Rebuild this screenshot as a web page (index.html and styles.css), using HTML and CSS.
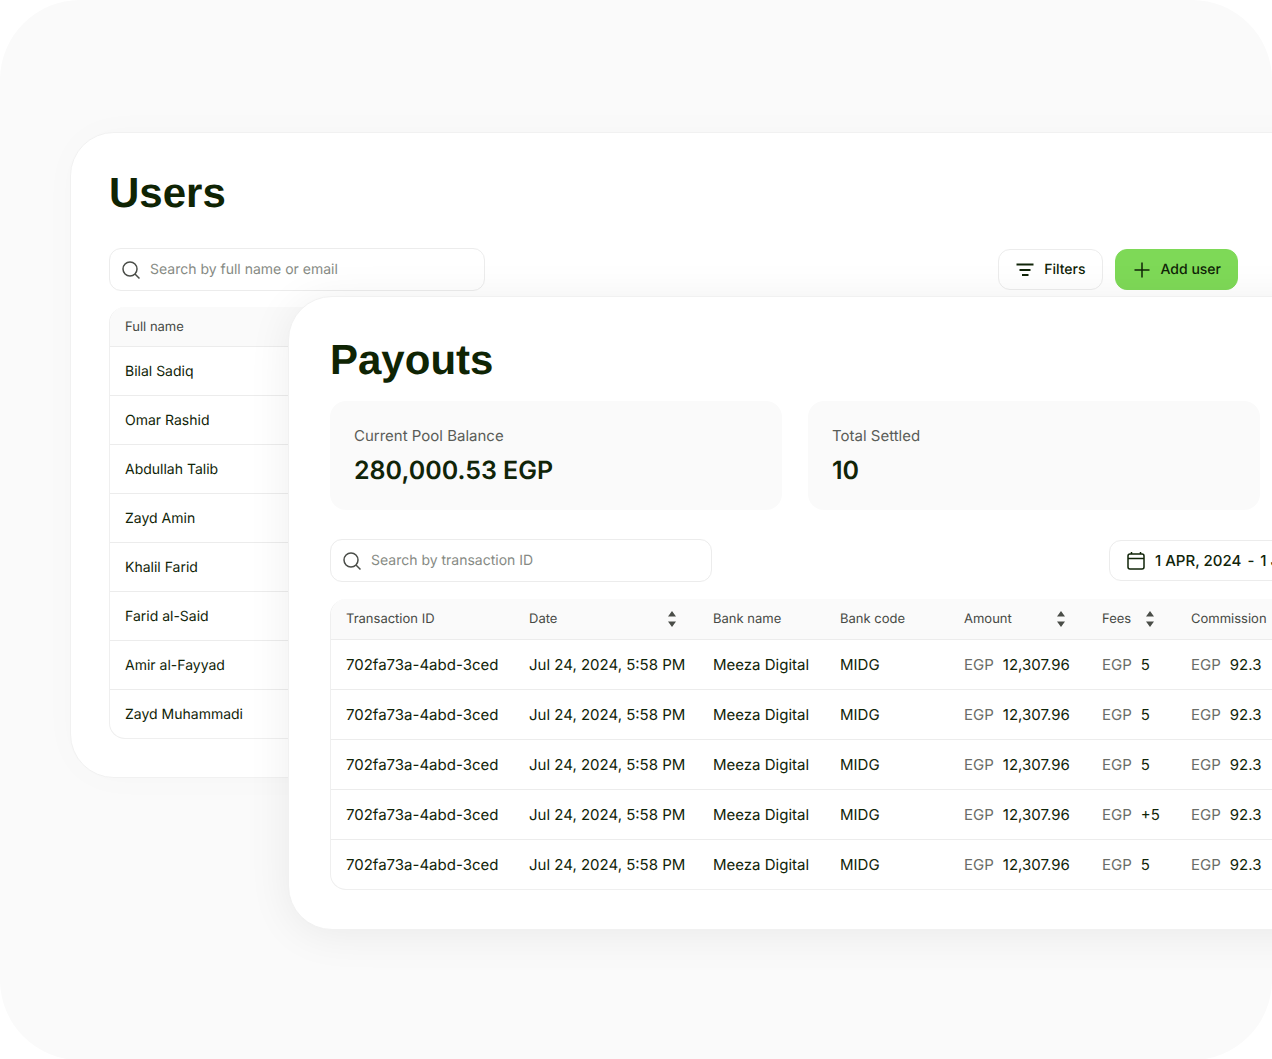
FILE: index.html
```html
<!DOCTYPE html>
<html lang="en">
<head>
    <meta charset="UTF-8">
    <meta name="viewport" content="width=device-width, initial-scale=1.0">
    <title>Payouts</title>
    <link rel="stylesheet" href="styles.css">
</head>
<body>
    <!-- Shared icons -->
    <svg class="sprite" aria-hidden="true">
        <symbol id="icon-search" viewBox="0 0 20 20">
            <circle cx="9" cy="9" r="7"/>
            <path d="M14 14l4.500 4.500"/>
        </symbol>
        <symbol id="icon-sort" viewBox="0 0 10 18">
            <path d="M5 1l4 5.500H1zM5 17l4-5.500H1z"/>
        </symbol>
    </svg>

    <main class="stage">
        <section class="window users">
            <h1>Users</h1>
            <div class="toolbar">
                <label class="search">
                    <svg class="icon"><use href="#icon-search"/></svg>
                    <input type="search" placeholder="Search by full name or email" aria-label="Search users">
                </label>
                <div class="actions">
                    <button type="button" class="btn">
                        <svg class="icon filter-icon" viewBox="0 0 20 20"><path d="M1.500 4.500h17M4.500 10h11M7 15h6.500"/></svg>
                        Filters
                    </button>
                    <button type="button" class="btn btn-primary">
                        <svg class="icon" viewBox="0 0 20 20"><path d="M10 2.500v15M2.500 10h15"/></svg>
                        Add user
                    </button>
                </div>
            </div>
            <div class="table-box">
                <table>
                    <thead>
                        <tr><th>Full name</th></tr>
                    </thead>
                    <tbody>
                        <tr><td>Bilal Sadiq</td></tr>
                        <tr><td>Omar Rashid</td></tr>
                        <tr><td>Abdullah Talib</td></tr>
                        <tr><td>Zayd Amin</td></tr>
                        <tr><td>Khalil Farid</td></tr>
                        <tr><td>Farid al-Said</td></tr>
                        <tr><td>Amir al-Fayyad</td></tr>
                        <tr><td>Zayd Muhammadi</td></tr>
                    </tbody>
                </table>
            </div>
        </section>

        <section class="window payouts">
            <h1>Payouts</h1>
            <div class="stats">
                <div class="stat">
                    <p class="stat-label">Current Pool Balance</p>
                    <p class="stat-value">280,000.53 EGP</p>
                </div>
                <div class="stat">
                    <p class="stat-label">Total Settled</p>
                    <p class="stat-value">10</p>
                </div>
            </div>
            <div class="toolbar">
                <label class="search">
                    <svg class="icon"><use href="#icon-search"/></svg>
                    <input type="search" placeholder="Search by transaction ID" aria-label="Search payouts">
                </label>
                <button type="button" class="btn date-btn">
                    <svg class="icon" viewBox="0 0 20 20"><rect x="2" y="3" width="16" height="15" rx="2"/><path d="M2 7.500h16M5.500 1v2M14.500 1v2"/></svg>
                    <span class="range"><span>1 APR, 2024</span><span>-</span><span>1 JUL, 2024</span></span>
                </button>
            </div>
            <div class="table-box">
                <table>
                    <colgroup>
                        <col class="col-id">
                        <col class="col-date">
                        <col class="col-bank">
                        <col class="col-code">
                        <col class="col-amount">
                        <col class="col-fees">
                        <col>
                    </colgroup>
                    <thead>
                        <tr>
                            <th>Transaction ID</th>
                            <th><div class="sortable">Date <svg class="sort"><use href="#icon-sort"/></svg></div></th>
                            <th>Bank name</th>
                            <th>Bank code</th>
                            <th><div class="sortable">Amount <svg class="sort"><use href="#icon-sort"/></svg></div></th>
                            <th><div class="sortable">Fees <svg class="sort"><use href="#icon-sort"/></svg></div></th>
                            <th>Commission</th>
                        </tr>
                    </thead>
                    <tbody>
                        <tr>
                            <td>702fa73a-4abd-3ced</td>
                            <td>Jul 24, 2024, 5:58 PM</td>
                            <td>Meeza Digital</td>
                            <td>MIDG</td>
                            <td><span class="currency">EGP</span>12,307.96</td>
                            <td><span class="currency">EGP</span>5</td>
                            <td><span class="currency">EGP</span>92.3</td>
                        </tr>
                        <tr>
                            <td>702fa73a-4abd-3ced</td>
                            <td>Jul 24, 2024, 5:58 PM</td>
                            <td>Meeza Digital</td>
                            <td>MIDG</td>
                            <td><span class="currency">EGP</span>12,307.96</td>
                            <td><span class="currency">EGP</span>5</td>
                            <td><span class="currency">EGP</span>92.3</td>
                        </tr>
                        <tr>
                            <td>702fa73a-4abd-3ced</td>
                            <td>Jul 24, 2024, 5:58 PM</td>
                            <td>Meeza Digital</td>
                            <td>MIDG</td>
                            <td><span class="currency">EGP</span>12,307.96</td>
                            <td><span class="currency">EGP</span>5</td>
                            <td><span class="currency">EGP</span>92.3</td>
                        </tr>
                        <tr>
                            <td>702fa73a-4abd-3ced</td>
                            <td>Jul 24, 2024, 5:58 PM</td>
                            <td>Meeza Digital</td>
                            <td>MIDG</td>
                            <td><span class="currency">EGP</span>12,307.96</td>
                            <td><span class="currency">EGP</span>+5</td>
                            <td><span class="currency">EGP</span>92.3</td>
                        </tr>
                        <tr>
                            <td>702fa73a-4abd-3ced</td>
                            <td>Jul 24, 2024, 5:58 PM</td>
                            <td>Meeza Digital</td>
                            <td>MIDG</td>
                            <td><span class="currency">EGP</span>12,307.96</td>
                            <td><span class="currency">EGP</span>5</td>
                            <td><span class="currency">EGP</span>92.3</td>
                        </tr>
                    </tbody>
                </table>
            </div>
        </section>
    </main>
</body>
</html>
```
FILE: styles.css
```css
* {
    box-sizing: border-box;
}

body {
    margin: 0;
    background: white;
    color: #102408;
    font-family: Inter, "Liberation Sans", sans-serif;
    font-size: 15px;
    line-height: 20px;
    text-rendering: geometricPrecision;
}

.sprite {
    display: none;
}

/* Both windows share one grid cell, the second lies over the first */
.stage {
    display: grid;
    grid-template-columns: minmax(0, 1fr);
    align-items: start;
    min-height: 100vh;
    padding: 132px 0 130px 70px;
    border-radius: 80px;
    background: #fafafa;
    overflow: hidden;
}

.window {
    grid-area: 1 / 1;
    border: 1px solid #f1f1f1;
    border-radius: 44px;
    background: white;
}

.users {
    margin-right: -80px;
    padding: 36px 38px 38px;
    box-shadow: 0 0 40px rgba(0, 0, 0, 0.02);
}

.payouts {
    margin: 164px -508px 0 218px;
    padding: 39px 41px;
    box-shadow: 0 4px 44px rgba(0, 0, 0, 0.07);
}

h1 {
    margin: 0;
    color: #0f2404;
    font-family: "Liberation Sans", Arial, sans-serif;
    font-size: 42px;
    line-height: 48px;
}

.toolbar {
    display: flex;
    align-items: center;
    justify-content: space-between;
}

.users .toolbar {
    margin: 31px 75px 16px 0;
}

.payouts .toolbar {
    display: grid;
    grid-template-columns: 779px auto;
    justify-content: start;
    margin: 29px 0 17px;
}

.search {
    display: flex;
    align-items: center;
    gap: 9px;
    width: 376px;
    height: 43px;
    padding: 0 11px;
    border: 1px solid #ececec;
    border-radius: 12px;
}

.payouts .search {
    width: 382px;
}

.search input {
    flex: 1;
    min-width: 0;
    padding: 0;
    border: none;
    outline: none;
    background: none;
    color: inherit;
    font: inherit;
    font-size: 14px;
    text-rendering: inherit;
}

.search input::placeholder {
    color: #868a84;
    opacity: 1;
}

.icon {
    flex: none;
    width: 20px;
    height: 20px;
    fill: none;
    stroke: currentColor;
    stroke-width: 1.5;
}

.search .icon {
    color: #4a4d48;
}

.filter-icon {
    stroke-width: 2;
}

.actions {
    display: flex;
    gap: 12px;
}

.btn {
    display: flex;
    align-items: center;
    gap: 9px;
    height: 41px;
    padding: 0 16px;
    border: 1px solid #ececec;
    border-radius: 12px;
    background: white;
    color: inherit;
    font: inherit;
    font-size: 14px;
    font-weight: 500;
    text-rendering: inherit;
    white-space: nowrap;
    cursor: pointer;
}

.date-btn {
    font-size: 15px;
}

.users .btn {
    background: none;
}

.users .btn-primary {
    border-color: #7ed957;
    background: #7ed957;
}

.range {
    display: flex;
    gap: 6px;
}

.stats {
    display: grid;
    grid-template-columns: repeat(3, 1fr);
    gap: 26px;
    margin-top: 17px;
}

.stat {
    padding: 25px 24px 23px;
    border-radius: 16px;
    background: #fafafa;
}

.stat p {
    margin: 0;
}

.stat-label {
    color: #5a5d58;
}

.stat-value {
    padding-top: 9px;
    font-size: 25px;
    font-weight: 600;
    line-height: 32px;
}

.table-box {
    border: 1px solid #efefef;
    border-top: none;
    border-radius: 16px;
    overflow: hidden;
}

table {
    width: 100%;
    table-layout: fixed;
    border-collapse: separate;
    border-spacing: 0;
}

th {
    height: 40px;
    padding: 0 21px 0 15px;
    border-bottom: 1px solid #ececec;
    background: #fafafa;
    color: #464944;
    font-size: 13px;
    font-weight: 400;
    text-align: left;
}

.payouts th {
    height: 41px;
}

.payouts th:last-child {
    padding-right: 0;
}

td {
    height: 50px;
    padding: 0 15px;
    border-bottom: 1px solid #ececec;
    white-space: nowrap;
}

.users td {
    height: 49px;
    padding-top: 1px;
    font-size: 14px;
}

tbody tr:last-child td {
    height: 49px;
    border-bottom: none;
}

.users tbody tr:last-child td {
    height: 48px;
}

.sortable {
    display: flex;
    align-items: center;
    justify-content: space-between;
}

.sort {
    width: 10px;
    height: 18px;
    fill: #4a4d48;
}

.currency {
    margin-right: 9px;
    color: #6a6d68;
}

.col-id {
    width: 183px;
}

.col-date {
    width: 184px;
}

.col-bank {
    width: 127px;
}

.col-code {
    width: 124px;
}

.col-amount {
    width: 138px;
}

.col-fees {
    width: 89px;
}
```
